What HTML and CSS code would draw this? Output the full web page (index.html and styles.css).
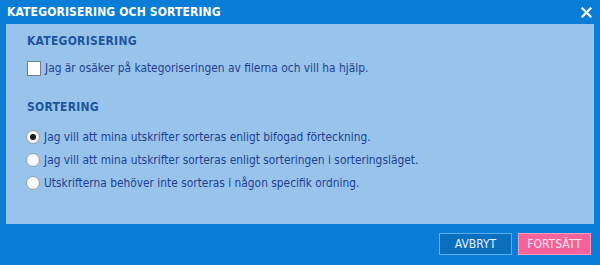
FILE: index.html
```html
<!DOCTYPE html>
<html lang="sv">
<head>
<meta charset="utf-8">
<title>Kategorisering och sortering</title>
<link rel="stylesheet" href="styles.css">
</head>
<body>
<div class="dialog">
  <div class="titlebar">
    <span class="title">KATEGORISERING OCH SORTERING</span>
    <span class="close" aria-label="Stäng">
      <svg width="11" height="11" viewBox="0 0 11 11"><path d="M1.5 1.5 L9.5 9.5 M9.5 1.5 L1.5 9.5" stroke="#fff" stroke-width="2.2" stroke-linecap="square"/></svg>
    </span>
  </div>
  <div class="panel">
    <div class="heading">KATEGORISERING</div>
    <label class="row check-row"><span class="checkbox"></span><span class="label">Jag är osäker på kategoriseringen av filerna och vill ha hjälp.</span></label>
    <div class="heading heading-2">SORTERING</div>
    <div class="radios">
      <label class="row"><span class="radio checked"></span><span class="label">Jag vill att mina utskrifter sorteras enligt bifogad förteckning.</span></label>
      <label class="row"><span class="radio"></span><span class="label">Jag vill att mina utskrifter sorteras enligt sorteringen i sorteringsläget.</span></label>
      <label class="row"><span class="radio"></span><span class="label">Utskrifterna behöver inte sorteras i någon specifik ordning.</span></label>
    </div>
  </div>
  <div class="footer">
    <button class="btn btn-cancel">AVBRYT</button>
    <button class="btn btn-continue">FORTSÄTT</button>
  </div>
</div>
</body>
</html>
```
FILE: styles.css
```css
html, body {
  margin: 0;
  padding: 0;
}
body {
  width: 600px;
  height: 265px;
  background: #0a7ed6;
  font-family: "DejaVu Sans Condensed", "DejaVu Sans", "Liberation Sans", sans-serif;
  font-size: 12px;
  overflow: hidden;
}
.dialog {
  width: 600px;
  height: 265px;
  display: flex;
  flex-direction: column;
  background: #0a7ed6;
}
.titlebar {
  height: 24px;
  display: flex;
  align-items: center;
  justify-content: space-between;
  padding: 0 8px 0 7px;
  box-sizing: border-box;
}
.title {
  color: #fff;
  font-weight: bold;
  font-size: 12px;
  line-height: 16px;
  letter-spacing: 0.15px;
}
.close {
  display: flex;
  width: 11px;
  height: 11px;
}
.panel {
  margin: 0 6px;
  height: 200px;
  box-sizing: border-box;
  background: #98c4ec;
  padding: 9px 21px 0 21px;
  display: flex;
  flex-direction: column;
}
.heading {
  color: #1d559c;
  font-weight: bold;
  font-size: 12px;
  line-height: 16px;
  height: 16px;
  letter-spacing: 0.25px;
}
.check-row {
  margin-top: 9px;
  height: 20px;
}
.heading-2 {
  margin-top: 21px;
}
.radios {
  margin-top: 10px;
  display: flex;
  flex-direction: column;
}
.row {
  display: flex;
  align-items: center;
  height: 23px;
  color: #1f3f8c;
  line-height: 16px;
  font-size: 11.85px;
}
.check-row.row {
  height: 20px;
}
.label {
  margin-left: 4px;
  white-space: nowrap;
}
.checkbox {
  width: 14px;
  height: 15px;
  box-sizing: border-box;
  background: #fff;
  border: 1px solid #6f7f8f;
  flex: none;
}
.radio {
  width: 14px;
  height: 14px;
  box-sizing: border-box;
  border-radius: 50%;
  background: radial-gradient(circle at 50% 50%, #ffffff 0, #f6f6f6 60%, #e2e4e8 100%);
  border: 1px solid #9aa3ad;
  flex: none;
  display: flex;
  align-items: center;
  justify-content: center;
  margin-left: -1px;
}
.radio.checked::after {
  content: "";
  width: 6px;
  height: 6px;
  border-radius: 50%;
  background: #1a1a1a;
}
.footer {
  display: flex;
  justify-content: flex-end;
  gap: 6px;
  padding: 9px 9px 0 0;
}
.btn {
  height: 22px;
  width: 73px;
  font-family: "DejaVu Sans Condensed", "DejaVu Sans", "Liberation Sans", sans-serif;
  font-size: 12px;
  padding: 0;
  box-sizing: border-box;
  cursor: pointer;
}
.btn-cancel {
  background: #0b6fbf;
  border: 1px solid #5aaeef;
  color: #e6f2ff;
}
.btn-continue {
  background: #f6639a;
  border: 1px solid #f9a0c2;
  color: #fde3ee;
}
```
